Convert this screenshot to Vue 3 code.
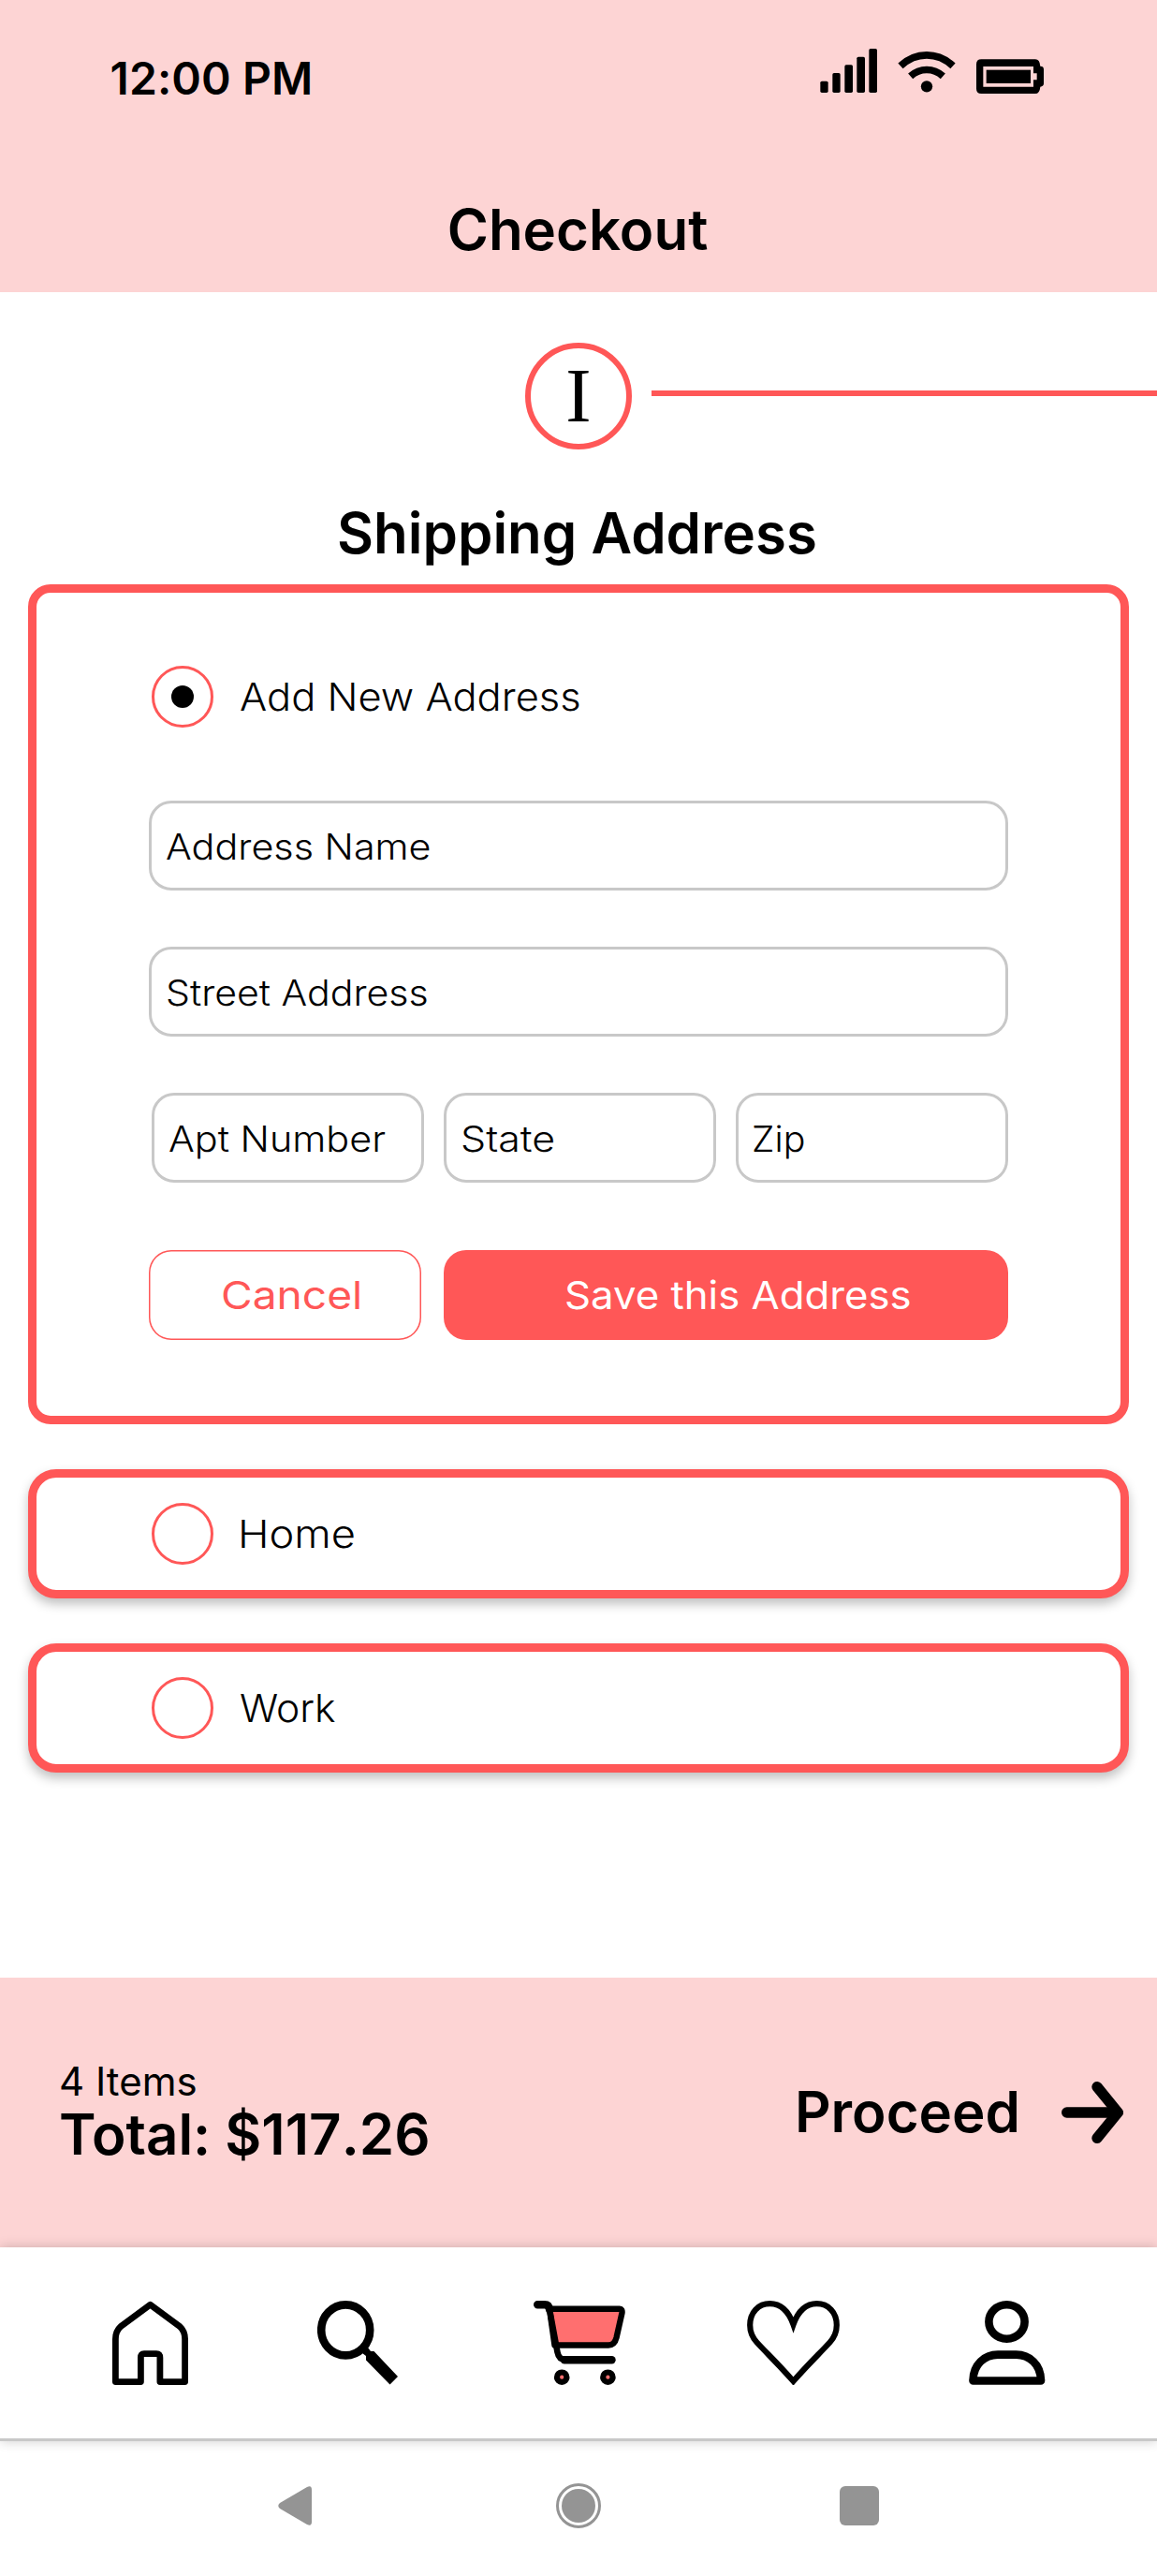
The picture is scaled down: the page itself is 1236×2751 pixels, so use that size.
<script setup>
import { ref } from 'vue'

const selected = ref('new')
const saved = [
  { id: 'home', label: 'Home', cls: 'w-home' },
  { id: 'work', label: 'Work', cls: 'w-work' },
]
</script>

<template>
  <div class="screen">
    <header class="header">
      <div class="status">
        <span class="time">12:00 PM</span>
        <svg class="status-icons" width="240" height="50" viewBox="108 60 720 150">
          <g>
            <rect x="109" y="170" width="25" height="37" rx="5" />
            <rect x="148" y="144" width="25" height="63" rx="5" />
            <rect x="187" y="118" width="26" height="89" rx="5" />
            <rect x="226" y="92" width="26" height="115" rx="5" />
            <rect x="265" y="66" width="26" height="141" rx="5" />
          </g>
          <g fill="none" stroke="#000" stroke-width="23">
            <path d="M366 121Q403 86.500 450 86.500T534 121" />
            <path d="M398 154Q421 133.500 450 133.500T502 154" />
          </g>
          <circle cx="450" cy="187" r="18.500" />
          <path
            fill-rule="evenodd"
            d="M625 100H798Q812 100 814 122Q825 122 825 132V178Q825 187 814 188Q812 210 798 210H625Q609 210 609 194V116Q609 100 625 100ZM631 123V188H792V166H803V145H792V123Z"
          />
          <rect x="641" y="134" width="142" height="43" />
        </svg>
      </div>
      <h1 class="title">Checkout</h1>
    </header>

    <main class="main">
      <div class="steps">
        <div class="step">I</div>
        <div class="track"></div>
      </div>
      <h2 class="section-title">Shipping Address</h2>

      <section class="card">
        <div class="option" @click="selected = 'new'">
          <span class="radio"><i v-if="selected === 'new'" class="dot"></i></span>
          <span class="wide w-add">Add New Address</span>
        </div>
        <div class="field"><span class="wide w-name">Address Name</span></div>
        <div class="field"><span class="wide w-street">Street Address</span></div>
        <div class="row">
          <div class="field"><span class="wide w-apt">Apt Number</span></div>
          <div class="field"><span class="wide w-state">State</span></div>
          <div class="field"><span class="wide w-zip">Zip</span></div>
        </div>
        <div class="actions">
          <div class="btn cancel"><span class="wide w-cancel">Cancel</span></div>
          <div class="btn save"><span class="wide w-save">Save this Address</span></div>
        </div>
      </section>

      <section v-for="a in saved" :key="a.id" class="saved" @click="selected = a.id">
        <div class="option">
          <span class="radio"><i v-if="selected === a.id" class="dot"></i></span>
          <span class="wide" :class="a.cls">{{ a.label }}</span>
        </div>
      </section>
    </main>

    <footer class="summary">
      <div class="totals">
        <div class="items">4 Items</div>
        <div class="total">Total: <span class="amount">$117.26</span></div>
      </div>
      <div class="proceed">
        <span>Proceed</span>
        <svg width="66" height="66" viewBox="0 0 198 198">
          <g fill="none" stroke="#000" stroke-width="34" stroke-linecap="round" stroke-linejoin="round">
            <path d="M17 99H176" />
            <path d="M114 17L181 99L114 181" />
          </g>
        </svg>
      </div>
    </footer>

    <nav class="nav">
      <svg class="n-home" width="81" height="90" viewBox="0 0 81 90">
        <path
          d="M3.400 86.600V41Q3.400 32.500 9 27.500L40.500 4.200L72 27.500Q77.600 32.500 77.600 41V86.600H50.900V61Q50.900 56.600 47 56.600H34Q30.400 56.600 30.400 61V86.600Z"
          fill="none" stroke="#000" stroke-width="6.800" stroke-linejoin="round"
        />
      </svg>
      <svg class="n-search" width="87" height="90" viewBox="0 0 87 90">
        <ellipse cx="30.200" cy="31.400" rx="26" ry="27" fill="none" stroke="#000" stroke-width="8.600" />
        <path d="M48 56L54 50L57 54L60.500 54L86 81L77.500 89.500L52 63.500V59Z" />
      </svg>
      <svg class="n-cart" width="98" height="90" viewBox="0 0 98 90">
        <path d="M17 8.700H92Q95 8.700 94.500 13L88.500 39.500Q86.500 47.500 80 47.500H22.500Z" fill="#ff6f6f" stroke="#000" stroke-width="6.400" stroke-linejoin="round" />
        <path d="M4.200 4.200H12Q16.500 4.200 17.200 10" fill="none" stroke="#000" stroke-width="8.400" stroke-linecap="round" />
        <path d="M16.800 8L25.500 55Q27 63 34 63H84" fill="none" stroke="#000" stroke-width="6.600" />
        <path d="M33 63.200H83.500" stroke="#000" stroke-width="8.400" stroke-linecap="round" />
        <circle cx="30.200" cy="81.700" r="5.200" fill="#ff6f6f" stroke="#000" stroke-width="6.200" />
        <circle cx="79.400" cy="81.700" r="5.200" fill="#ff6f6f" stroke="#000" stroke-width="6.200" />
      </svg>
      <svg class="n-heart" width="99" height="90" viewBox="0 0 99 90">
        <path
          d="M49.500 25.500C45 13 37 3.200 24.500 3.200C12 3.200 3.200 12.500 3.200 26C3.200 33 5.500 39 10.500 44.500C22 57 31 65 49.500 86C68 65 77 57 88.500 44.500C93.500 39 95.800 33 95.800 26C95.800 12.500 87 3.200 74.500 3.200C62 3.200 54 13 49.500 25.500Z"
          fill="none" stroke="#000" stroke-width="6.200" stroke-miterlimit="10"
        />
      </svg>
      <svg class="n-user" width="82" height="90" viewBox="0 0 82 90">
        <g fill="none" stroke="#000" stroke-width="8.600" stroke-linejoin="round">
          <ellipse cx="40.500" cy="22.500" rx="19.100" ry="18.200" />
          <path d="M4.500 85.500C4.500 68 17 57.600 31 57.600H50.500C64.500 57.600 77 68 77 85.500Z" />
        </g>
      </svg>
    </nav>

    <div class="system">
      <svg width="36" height="42" viewBox="0 0 36 42">
        <path d="M2 18L31 1Q36 -1.500 36 4V38Q36 43.500 31 41L2 24Q-1.500 21 2 18Z" />
      </svg>
      <svg class="s-home" width="48" height="48" viewBox="0 0 48 48">
        <circle cx="24" cy="24" r="22.500" fill="none" stroke="#949494" stroke-width="3" />
        <circle cx="24" cy="24" r="18" />
      </svg>
      <div class="s-recent"></div>
    </div>
  </div>
</template>

<style>
body {
  background: #fff;
}
</style>

<style scoped>
.screen {
  width: 1236px;
  height: 2751px;
  overflow: hidden;
  display: flex;
  flex-direction: column;
  background: #fff;
  color: #000;
  font-family: Inter, "Liberation Sans", sans-serif;
}
.header {
  box-sizing: border-box;
  height: 312px;
  padding-top: 50px;
  background: #fdd4d4;
}
.status {
  display: flex;
  justify-content: space-between;
  padding: 0 120px 0 117.500px;
  height: 159px;
}
.time {
  margin-top: 4px;
  font-size: 48px;
  line-height: 60px;
  font-weight: 600;
  letter-spacing: 0.1px;
}
.status-icons {
  display: block;
}
.title,
.section-title {
  margin: 0;
  font-size: 60px;
  line-height: 72px;
  font-weight: 600;
  text-align: center;
}
.title {
  margin-right: 2px;
}
.main {
  height: 1800px;
}
.steps {
  display: flex;
  align-items: flex-start;
  padding: 54px 0 0 561px;
}
.step {
  box-sizing: border-box;
  width: 114px;
  height: 114px;
  border: 6px solid #ff5757;
  border-radius: 50%;
  font-family: "Liberation Serif", serif;
  font-size: 82px;
  line-height: 101px;
  text-align: center;
}
.track {
  flex: 1;
  height: 6px;
  margin: 51px 0 0 21px;
  background: #ff5757;
}
.section-title {
  margin: 53px 3px 19px 0;
}
.card {
  box-sizing: border-box;
  width: 1176px;
  height: 897px;
  margin: 0 30px;
  padding: 78px 120px 0;
  border: 9px solid #ff5757;
  border-radius: 24px;
}
.option {
  display: flex;
  gap: 27.500px;
  padding-left: 3px;
  font-size: 41px;
  line-height: 66px;
  font-weight: 300;
}
.radio {
  box-sizing: border-box;
  width: 66px;
  height: 66px;
  border: 3px solid #ff5757;
  border-radius: 50%;
  display: flex;
  align-items: center;
  justify-content: center;
}
.dot {
  width: 24px;
  height: 24px;
  border-radius: 50%;
  background: #000;
}
.field {
  box-sizing: border-box;
  height: 96px;
  border: 3px solid #c8c8c8;
  border-radius: 24px;
  padding: 1px 0 0 15px;
  margin-top: 60px;
  font-size: 38px;
  line-height: 90px;
  font-weight: 300;
  white-space: nowrap;
}
.option + .field {
  margin-top: 78px;
}
.row {
  display: flex;
  gap: 21px;
  padding-left: 3px;
}
.row .field {
  width: 291px;
}
.actions {
  display: flex;
  gap: 24px;
  margin-top: 72px;
}
.btn {
  box-sizing: border-box;
  height: 96px;
  border-radius: 24px;
  font-size: 41px;
  line-height: 96px;
  font-weight: 400;
}
.cancel {
  width: 291px;
  padding-left: 76.500px;
  box-shadow: inset 0 0 0 1.500px #ff5757;
  color: #ff5757;
}
.save {
  flex: 1;
  padding-left: 128.500px;
  background: #ff5757;
  color: #fff;
}
.saved {
  box-sizing: border-box;
  width: 1176px;
  height: 138px;
  margin: 48px 30px 0;
  padding: 27px 120px 0;
  border: 9px solid #ff5757;
  border-radius: 30px;
  background: #fff;
  box-shadow: 0 6px 12px rgba(0, 0, 0, 0.25);
}
/* Widened letterforms for the form labels */
.wide {
  display: inline-block;
  transform-origin: 0 50%;
}
.w-add { transform: scaleX(1.059); }
.w-home { transform: scaleX(1.103); margin-left: -1.500px; }
.w-work { transform: scaleX(1.04); }
.w-name { transform: scaleX(1.086); }
.w-street { transform: scaleX(1.08); }
.w-apt { transform: scaleX(1.087); }
.w-state { transform: scaleX(1.13); }
.w-zip { transform: scaleX(1.035); margin-left: -1px; }
.w-cancel { transform: scaleX(1.125); }
.w-save { transform: scaleX(1.066); }
.summary {
  box-sizing: border-box;
  height: 288px;
  display: flex;
  justify-content: space-between;
  padding: 90px 36px 0 63px;
  background: #fdd4d4;
}
.items {
  font-size: 42px;
  line-height: 42px;
  height: 41px;
}
.total {
  font-size: 60px;
  line-height: 72px;
  font-weight: 600;
}
.amount {
  font-kerning: none;
}
.proceed {
  display: flex;
  align-items: flex-start;
  gap: 44px;
  padding-top: 17px;
  font-size: 60px;
  line-height: 72px;
  font-weight: 600;
}
.proceed svg {
  margin-top: 4px;
}
.nav {
  box-sizing: border-box;
  position: relative;
  height: 207px;
  display: flex;
  padding: 57px 0 0 120px;
  background: #fff;
  border-bottom: 3px solid #c8c8c8;
  box-shadow: 0 0 12px rgba(0, 0, 0, 0.2);
}
.n-search { margin-left: 138px; }
.n-cart { margin-left: 144px; }
.n-heart { margin-left: 130px; }
.n-user { margin-left: 138px; }
.system {
  display: flex;
  align-items: center;
  height: 138px;
  padding: 0 0 0 297px;
}
.system svg {
  fill: #949494;
}
.s-home {
  margin-left: 261px;
}
.s-recent {
  width: 42px;
  height: 42px;
  margin-left: 255px;
  border-radius: 6px;
  background: #949494;
}
</style>
